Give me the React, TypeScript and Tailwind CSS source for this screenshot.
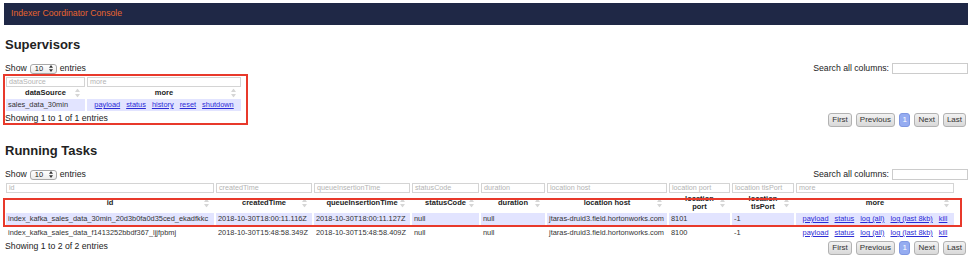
import React from 'react';

const LINK = 'text-[#2b2bd6] underline';

const SortIcon: React.FC = () => (
  <svg
    width="5"
    height="9"
    viewBox="0 0 5 9"
    className="absolute right-[5px] top-1/2 -translate-y-1/2"
  >
    <path d="M2.5 0L5 3.6H0Z M2.5 9L0 5.4H5Z" fill="#d6d6d6" />
  </svg>
);

const FilterBox: React.FC<{ label: string }> = ({ label }) => (
  <div className="h-[10px] border border-[#d4d4d4] bg-white pl-[2px] text-[7.2px] leading-[8px] text-[#b4b4b4] whitespace-nowrap overflow-hidden">
    {label}
  </div>
);

const HeadCell: React.FC<{ label: string }> = ({ label }) => (
  <th className="relative px-[10px] p-0 text-center align-middle text-[7.5px] leading-[8px] font-bold text-[#222]">
    {label}
    <SortIcon />
  </th>
);

const ShowEntries: React.FC = () => (
  <div className="flex items-center gap-[3px] text-[8.7px] leading-[11px]">
    <span>Show</span>
    <span className="flex h-[10px] w-[27px] items-center justify-between rounded-[3px] border border-[#a8a8a8] bg-gradient-to-b from-white to-[#ececec] pl-[4px] pr-[3px] text-[7.5px] leading-[8px]">
      <span>10</span>
      <svg width="4" height="7" viewBox="0 0 4 7">
        <path d="M2 0L4 2.8H0Z M2 7L0 4.2H4Z" fill="#333" />
      </svg>
    </span>
    <span>entries</span>
  </div>
);

const SearchBox: React.FC = () => (
  <div className="flex items-center gap-[3px] text-[8.7px] leading-[11px]">
    <span>Search all columns:</span>
    <span className="h-[11px] w-[76px] border border-[#cccccc] bg-white" />
  </div>
);

const Pager: React.FC = () => {
  const btn =
    'h-[14px] rounded-[3px] border border-[#b2b2b2] bg-gradient-to-b from-[#f2f2f2] to-[#d9d9d9] px-[3px] text-[8px] leading-[12px] text-[#333]';
  return (
    <div className="mr-[2px] flex gap-[4px]">
      <span className={btn}>First</span>
      <span className={btn}>Previous</span>
      <span className="h-[14px] rounded-[3px] border border-[#7f97e2] bg-[#95acf1] px-[2.5px] text-[8px] leading-[12px] text-white">
        1
      </span>
      <span className={btn}>Next</span>
      <span className={btn}>Last</span>
    </div>
  );
};

const tasks = [
  {
    id: 'index_kafka_sales_data_30min_20d3b0fa0d35ced_ekadfkkc',
    created: '2018-10-30T18:00:11.116Z',
    queued: '2018-10-30T18:00:11.127Z',
    port: '8101',
  },
  {
    id: 'index_kafka_sales_data_f1413252bbdf367_ljjfpbmj',
    created: '2018-10-30T15:48:58.349Z',
    queued: '2018-10-30T15:48:58.409Z',
    port: '8100',
  },
];

const taskCols = [208, 96, 96, 67, 64, 120, 61, 62, 158];
const taskHeads = [
  'id',
  'createdTime',
  'queueInsertionTime',
  'statusCode',
  'duration',
  'location host',
  'location port',
  'location tlsPort',
  'more',
];

const cell = 'px-[2px] p-0 align-middle text-[7.4px] leading-[12px] text-[#333] whitespace-nowrap overflow-hidden';

export default function App() {
  return (
    <div className="h-[264px] w-[974px] overflow-hidden bg-white pl-[4px] pr-[6px] pt-[3px] font-['Liberation_Sans',Arial,sans-serif] text-[#222]">
      <div className="flex h-[22px] items-center bg-[#1f2846] pl-[7px] text-[8.7px] text-[#e8652e]">
        Indexer Coordinator Console
      </div>

      {/* Supervisors */}
      <h2 className="ml-[1px] mt-[12px] text-[13px] font-bold leading-[16px] text-[#222]">Supervisors</h2>
      <div className="mt-[10px] ml-[1px] flex h-[11px] items-center justify-between">
        <ShowEntries />
        <SearchBox />
      </div>

      <div className="relative mt-[1px]">
        <table className="w-[239px] table-fixed border-separate border-spacing-[2px]">
          <colgroup>
            <col className="w-[79px]" />
            <col className="w-[154px]" />
          </colgroup>
          <thead>
            <tr>
              <td className="p-0"><FilterBox label="dataSource" /></td>
              <td className="p-0"><FilterBox label="more" /></td>
            </tr>
            <tr className="h-[7px]">
              <HeadCell label="dataSource" />
              <HeadCell label="more" />
            </tr>
          </thead>
          <tbody>
            <tr className="h-[12px] bg-[#e2e4ff]">
              <td className={cell}>sales_data_30min</td>
              <td className={cell}>
                <div className="flex justify-center gap-[6px]">
                  <span className={LINK}>payload</span>
                  <span className={LINK}>status</span>
                  <span className={LINK}>history</span>
                  <span className={LINK}>reset</span>
                  <span className={LINK}>shutdown</span>
                </div>
              </td>
            </tr>
          </tbody>
        </table>
        <div className="flex items-start justify-between">
          <span className="ml-[1px] text-[8.7px] leading-[11px]">Showing 1 to 1 of 1 entries</span>
          <Pager />
        </div>
        <div className="pointer-events-none absolute left-[-1px] top-[-1px] h-[51px] w-[245px] border-2 border-[#e8392b]" />
      </div>

      {/* Running Tasks */}
      <h2 className="ml-[1px] mt-[16px] text-[13px] font-bold leading-[16px] text-[#222]">Running Tasks</h2>
      <div className="mt-[10px] ml-[1px] flex h-[11px] items-center justify-between">
        <ShowEntries />
        <SearchBox />
      </div>

      <div className="relative mt-[1px]">
        <table className="w-[952px] table-fixed border-separate border-spacing-[2px]">
          <colgroup>
            {taskCols.map((w, i) => (
              <col key={i} style={{ width: w }} />
            ))}
          </colgroup>
          <thead>
            <tr>
              {taskHeads.map((h) => (
                <td key={h} className="p-0">
                  <FilterBox label={h} />
                </td>
              ))}
            </tr>
            <tr className="h-[16px]">
              {taskHeads.map((h) => (
                <HeadCell key={h} label={h} />
              ))}
            </tr>
          </thead>
          <tbody>
            {tasks.map((t, i) => (
              <tr key={t.id} className={i % 2 === 0 ? 'h-[12px] bg-[#e2e4ff]' : 'h-[12px] bg-white'}>
                <td className={cell}>{t.id}</td>
                <td className={cell}>{t.created}</td>
                <td className={cell}>{t.queued}</td>
                <td className={cell}>null</td>
                <td className={cell}>null</td>
                <td className={cell}>jtaras-druid3.field.hortonworks.com</td>
                <td className={cell}>{t.port}</td>
                <td className={cell}>-1</td>
                <td className={cell}>
                  <div className="flex justify-center gap-[6px]">
                    <span className={LINK}>payload</span>
                    <span className={LINK}>status</span>
                    <span className={LINK}>log (all)</span>
                    <span className={LINK}>log (last 8kb)</span>
                    <span className={LINK}>kill</span>
                  </div>
                </td>
              </tr>
            ))}
          </tbody>
        </table>
        <div className="flex items-start justify-between">
          <span className="ml-[1px] text-[8.7px] leading-[11px]">Showing 1 to 2 of 2 entries</span>
          <Pager />
        </div>
        <div className="pointer-events-none absolute left-[-1px] top-[17px] h-[29px] w-[959px] border-2 border-[#e8392b]" />
      </div>
    </div>
  );
}
